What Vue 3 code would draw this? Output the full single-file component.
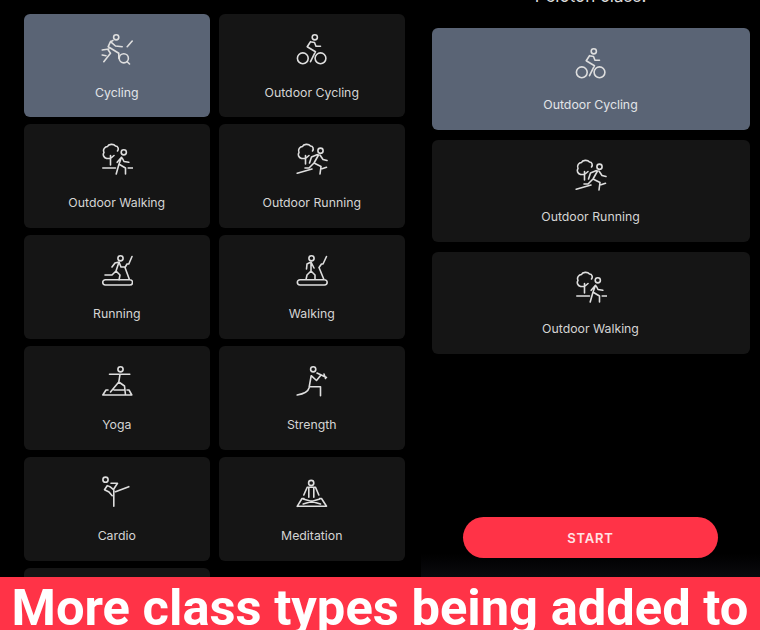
<script setup>
const icons = {
  cycling: {
    heads: [[15.2, 4.3, 2.6], [22.8, 25.3, 4.6]],
    d: 'M9.5 8.7 L7.2 13.7 L17.8 20.3 V25.3 M9.5 8.7 L12 7.5 M9.5 8.7 L14.5 13 L21.2 13.7 M26.2 13.7 L31.2 8 M26 28.5 L28.5 31 M1.2 17 L7.8 16 M7.2 17 L9.5 20.3 L2.8 28.7 M1.2 22 L5 22.7',
  },
  outdoorCycling: {
    heads: [[18.8, 4.3, 2.6], [6.8, 25.3, 5.4], [24.5, 25.3, 5.4]],
    d: 'M14.5 8.7 L11.2 13.7 L19.5 18.7 L14.5 28.7 M14.5 8.7 L18.5 9.5 L20 13.2 H24.5',
  },
  outdoorWalking: {
    heads: [[22.8, 9.3, 2.6]],
    d: 'M5.5 15.5 C2.5 14.5 1.5 11.5 3 9.5 C1.5 6.5 4 3.5 6.5 3.5 C7.5 1 12.5 0.5 14.5 3 C17 3 18 6 16.5 8 M9.5 22 V12.5 M9.5 15.5 H6 M9.5 15.5 L13 12.5 M20.5 14.3 L17.8 21.7 L15.2 31 M20.5 14.3 L16.2 19.3 M21.2 15 L23 18.5 L27.8 19.3 M19 21.7 L24.5 25 V31 M1.8 25 H14.5 M27.2 25 H31.5',
  },
  outdoorRunning: {
    heads: [[24.5, 7.7, 2.6]],
    d: 'M5.5 15.5 C2.5 14.5 1.5 11.5 3 9.5 C1.5 6.5 4 3.5 6.5 3.5 C7.5 1 12.5 0.5 14.5 3 C17 3 18 6 16.5 8 M9.5 21 V12.5 M9.5 15.5 H6 M9.5 15.5 L13 12.5 M21.5 11.5 L15.5 14 L13.5 20 M22.5 12 L18 20 L13 25 H9 M24 12 L27 16.5 L31 17.5 M18 20 L25 23.5 L24 31 M1.2 30.3 L16 26 M26 25.8 L30.5 24.3',
  },
  running: {
    heads: [[19.5, 4.3, 2.6]],
    d: 'M18 8 L15 17 M18 8 L14 9 L11 13 M18 8 L20 13 H24 M15 17 L11 21 H4 M15 17 L19 21 L18 26 M27.8 10 L31 2.5 M27.8 10 H26 L24 13.5 L28.5 25.7 M4.4 25.7 H28.9 A2.6 2.6 0 0 1 28.9 31 H4.4 A2.6 2.6 0 0 1 4.4 25.7 Z',
  },
  walking: {
    heads: [[15.5, 4.3, 2.6]],
    d: 'M15 8 V17 M15 8 L11 10 L10.5 15 M15 8 L18 14 M15 17 L11 21 L10 25.7 M15 17 L19 21 V25.7 M27 10 L30.5 2.5 M27 10 H25.5 L23 13.5 L28 25.7 M4 25.7 H28.5 A2.6 2.6 0 0 1 28.5 31 H4 A2.6 2.6 0 0 1 4 25.7 Z',
  },
  yoga: {
    heads: [[19.5, 4.3, 2.6]],
    d: 'M8.5 9.3 H28.8 M19 9.3 L17.8 17 L9.5 27 M17.8 17 L23.5 21 L24.5 30 M13 25 H23 M1.8 30 H30.8 L28 25 H26 M1.8 30 L5 25 H7',
  },
  strength: {
    heads: [[17.2, 4.3, 2.6]],
    d: 'M1.2 30 C7 29 12 27 13 23 L15.2 10.7 L20.5 15.5 L25 10 M14.5 21.7 H24.5 V30.7 M21 8 L30.5 12.5 M28 9 L29.5 13.5',
  },
  cardio: {
    heads: [[4.5, 3.7, 2.6]],
    d: 'M12.8 14 V30.3 M14.5 15.7 L27.8 10.7 M12.8 13 L16.5 7.3 H10 M6.2 9.7 L3.5 13.7 L8 16 L11.2 19.7 M6.2 9.7 C9 10 11 12 12.8 14',
  },
  meditation: {
    heads: [[15.2, 7, 2.6]],
    d: 'M11.2 11.3 L7.8 19 M12.8 11.3 V21.3 M19.5 11.3 L22.8 19 M17.8 11.3 V21.3 M11.2 11.3 H19.5 M7.2 23 L24.5 28 M23.8 23 L7.2 28 M1.2 30.3 H30.5 L25.5 22.5 H23.5 M1.2 30.3 L6 22.5 H8',
  },
}

const classes = [
  { label: 'Cycling', icon: 'cycling', active: true },
  { label: 'Outdoor Cycling', icon: 'outdoorCycling' },
  { label: 'Outdoor Walking', icon: 'outdoorWalking' },
  { label: 'Outdoor Running', icon: 'outdoorRunning' },
  { label: 'Running', icon: 'running' },
  { label: 'Walking', icon: 'walking' },
  { label: 'Yoga', icon: 'yoga' },
  { label: 'Strength', icon: 'strength' },
  { label: 'Cardio', icon: 'cardio' },
  { label: 'Meditation', icon: 'meditation' },
]

const pelotonClasses = [
  { label: 'Outdoor Cycling', icon: 'outdoorCycling', active: true },
  { label: 'Outdoor Running', icon: 'outdoorRunning' },
  { label: 'Outdoor Walking', icon: 'outdoorWalking' },
]
</script>

<template>
  <div class="screen">
    <div class="left">
      <div v-for="item in classes" :key="item.label" class="card" :class="{ active: item.active }">
        <svg class="icon" viewBox="0 0 32 32" width="32" height="32">
          <circle v-for="(c, i) in icons[item.icon].heads" :key="i" :cx="c[0]" :cy="c[1]" :r="c[2]" />
          <path :d="icons[item.icon].d" />
        </svg>
        <span class="label">{{ item.label }}</span>
      </div>
      <div class="card"></div>
    </div>

    <div class="right">
      <h2 class="title">Peloton class:</h2>
      <div class="list">
        <div v-for="item in pelotonClasses" :key="item.label" class="card wide" :class="{ active: item.active }">
          <svg class="icon" viewBox="0 0 32 32" width="32" height="32">
            <circle v-for="(c, i) in icons[item.icon].heads" :key="i" :cx="c[0]" :cy="c[1]" :r="c[2]" />
            <path :d="icons[item.icon].d" />
          </svg>
          <span class="label">{{ item.label }}</span>
        </div>
      </div>
      <button class="start">START</button>
    </div>

    <div class="banner">More class types being added to</div>
  </div>
</template>

<style>
html,
body {
  margin: 0;
  background: #000;
}
</style>

<style scoped>
.screen {
  position: relative;
  display: flex;
  width: 760px;
  height: 630px;
  overflow: hidden;
  background: #000;
  font-family: Inter, "Liberation Sans", sans-serif;
}

.left {
  box-sizing: border-box;
  width: 421px;
  height: 630px;
  padding: 13.5px 0 0 24px;
  display: grid;
  grid-template-columns: 185.5px 185.5px;
  grid-auto-rows: 103.7px;
  column-gap: 9.5px;
  row-gap: 7.3px;
  overflow: hidden;
}

.card {
  display: flex;
  flex-direction: column;
  align-items: center;
  padding-top: 19px;
  box-sizing: border-box;
  background: #151515;
  border-radius: 6px;
}

.card.active {
  background: #5a6475;
}

.icon {
  display: block;
  fill: none;
  stroke: #dedede;
  stroke-width: 1.6;
  stroke-linecap: round;
  stroke-linejoin: round;
}

.label {
  margin-top: 20px;
  font-size: 12.3px;
  line-height: 16px;
  color: #d4d4d4;
}

.active .label {
  color: #e2e4e8;
}

.right {
  box-sizing: border-box;
  width: 339px;
  height: 577px;
  padding: 0 10.5px 18.7px 10.5px;
  display: flex;
  flex-direction: column;
  align-items: center;
  background: linear-gradient(to bottom, #000 96%, #0a0a0e 100%);
}

.title {
  margin: -14.5px 0 0;
  font-size: 17px;
  line-height: 20px;
  font-weight: 400;
  color: #dcdcdc;
}

.list {
  align-self: stretch;
  margin-top: 22px;
  display: flex;
  flex-direction: column;
  gap: 10px;
}

.card.wide {
  height: 102px;
}

.card.wide .label {
  margin-top: 18.5px;
}

.start {
  margin-top: auto;
  width: 255px;
  height: 41px;
  border: none;
  border-radius: 21px;
  background: #ff3347;
  color: #ffe3e5;
  font-family: inherit;
  font-size: 13px;
  font-weight: 600;
  letter-spacing: 0.8px;
}

.banner {
  position: absolute;
  left: 0;
  right: 0;
  top: 577px;
  height: 53px;
  overflow: hidden;
  background: #ff3347;
  color: #fff;
  font-family: Roboto, sans-serif;
  font-size: 50.7px;
  font-weight: 700;
  line-height: 62px;
  text-align: center;
  white-space: nowrap;
}
</style>
